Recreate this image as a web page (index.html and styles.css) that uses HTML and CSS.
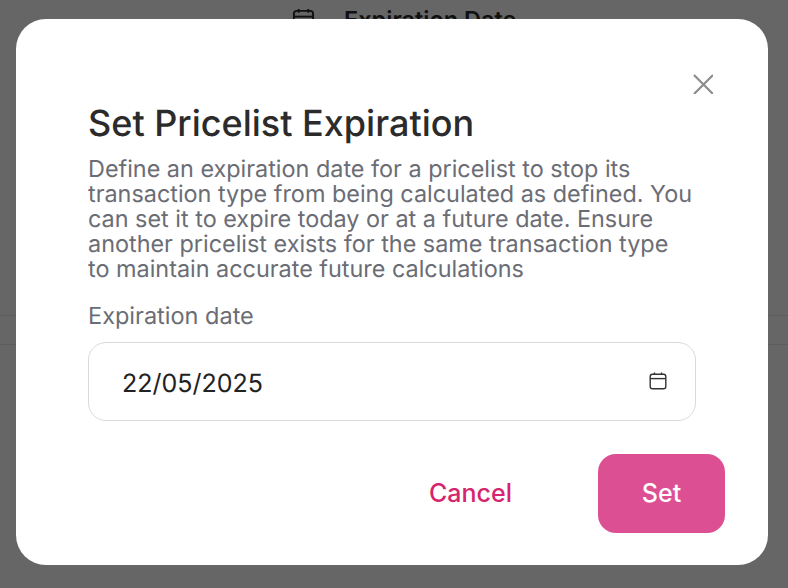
FILE: index.html
```html
<!DOCTYPE html>
<html lang="en">
<head>
<meta charset="utf-8">
<title>Set Pricelist Expiration</title>
<link rel="stylesheet" href="styles.css">
</head>
<body>
<div class="page">
  <div class="page-head">
    <svg class="page-icon" viewBox="0 0 24 24" fill="none" stroke="#2b2b2b" stroke-width="2"><path d="M7 1v4M17 1v4"/><rect x="2" y="3" width="20" height="20" rx="3"/><path d="M2 9h20"/></svg>
    <span class="page-title">Expiration Date</span>
  </div>
  <div class="page-row"></div>
</div>
<div class="overlay">
  <div class="modal">
    <div class="close-row">
      <button class="close" aria-label="Close">
        <svg viewBox="0 0 20 20" width="20" height="20" fill="none" stroke="#8c8c8c" stroke-width="2.2"><path d="M1 1l19 19M20 1L1 20"/></svg>
      </button>
    </div>
    <h1 class="title">Set Pricelist Expiration</h1>
    <p class="desc">Define an expiration date for a pricelist to stop its transaction type from being calculated as defined. You can set it to expire today or at a future date. Ensure another pricelist exists for the same transaction type to maintain accurate future calculations</p>
    <label class="label">Expiration date</label>
    <div class="input">
      <span class="value">22/05/2025</span>
      <svg class="cal" viewBox="0 0 18 18" width="18" height="18" fill="none" stroke="#333" stroke-width="1.4"><path d="M5.5 0.5v2.5M12.5 0.5v2.5"/><rect x="1.2" y="2.2" width="15.6" height="14.6" rx="2.2"/><path d="M1.2 6.6h15.6"/></svg>
    </div>
    <div class="actions">
      <button class="btn-cancel">Cancel</button>
      <button class="btn-set">Set</button>
    </div>
  </div>
</div>
</body>
</html>
```
FILE: styles.css
```css
* { box-sizing: border-box; }
html, body { margin: 0; height: 100%; }
body {
  width: 788px;
  height: 588px;
  overflow: hidden;
  background: #fff;
  font-family: Inter, "Liberation Sans", sans-serif;
  text-rendering: geometricPrecision;
  position: relative;
}
.page { height: 100%; }
.page-head {
  display: flex;
  align-items: center;
  gap: 29px;
  padding: 7px 0 0 292px;
  height: 31px;
}
.page-icon { width: 23px; height: 23px; flex: none; }
.page-title { font-size: 23.5px; font-weight: 600; color: #2b2b2b; }
.page-row {
  margin-top: 284px;
  height: 30px;
  border-top: 1px solid #e8e8e8;
  border-bottom: 1px solid #e8e8e8;
}
.overlay {
  position: absolute;
  inset: 0;
  background: rgba(0, 0, 0, 0.6);
  padding: 19px 20px 23px 16px;
}
.modal {
  height: 546px;
  background: #fff;
  border-radius: 30px;
  padding: 53px 72px 0;
}
.close-row { display: flex; justify-content: flex-end; height: 0; }
.close {
  background: none;
  border: 0;
  padding: 0;
  height: 22px;
  margin-right: -17px;
  margin-top: 1px;
}
.close svg { display: block; }
.title {
  margin: 0;
  padding-top: 27px;
  font-size: 36px;
  line-height: 48px;
  font-weight: 500;
  color: #2b2b2b;
}
.desc {
  margin: 9px 0 0;
  font-size: 23.4px;
  line-height: 25px;
  color: #6b6d75;
  width: 608px;
}
.label {
  display: block;
  margin-top: 21px;
  font-size: 23.5px;
  line-height: 28px;
  color: #6b6d75;
}
.input {
  margin-top: 12px;
  height: 79px;
  border: 1px solid #d9d9d9;
  border-radius: 18px;
  display: flex;
  align-items: center;
  justify-content: space-between;
  padding: 1px 28px 0 33px;
}
.value { font-size: 25px; color: #222; margin-top: 3px; }
.cal { display: block; margin-top: -2px; }
.actions {
  margin: 33px -29px 0 0;
  display: flex;
  justify-content: flex-end;
  align-items: center;
}
.btn-cancel {
  background: none;
  border: 0;
  padding: 0 0 1px;
  font: 450 25px Inter, "Liberation Sans", sans-serif;
  color: #d6246e;
  margin-right: 86px;
}
.btn-set {
  width: 127px;
  height: 79px;
  border: 0;
  border-radius: 18px;
  background: #dc4f92;
  color: #fff;
  padding: 0 0 1px;
  font: 450 25px Inter, "Liberation Sans", sans-serif;
}
```
